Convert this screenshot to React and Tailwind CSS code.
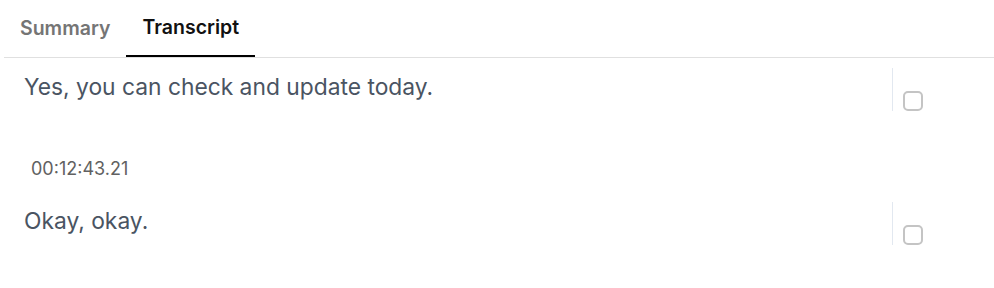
export default function App() {
  const font = { fontFamily: "Inter, 'Noto Sans', sans-serif" };
  return (
    <div className="w-[994px] h-[288px] bg-white" style={font}>
      <div className="ml-1 flex border-b border-[#e0e0e0] h-[58px]">
        <button className="px-4 h-full text-[19.5px] font-semibold text-[#757575]">Summary</button>
        <button className="px-4 h-full text-[19.5px] font-semibold text-[#111] border-b-2 border-black -mb-px">Transcript</button>
      </div>

      <div className="mt-[10px] flex">
        <div className="flex-1 pl-6 pt-[4px] text-[22.8px] leading-[30px] text-[#4a5462]">Yes, you can check and update today.</div>
        <div className="w-[102px] flex">
          <div className="w-px h-[43px] bg-[#e2e8f0]"></div>
          <div className="pl-[10px] pt-[23px]">
            <div className="w-[20px] h-[20px] rounded-[5px] border-2 border-[#c4c4c4]"></div>
          </div>
        </div>
      </div>

      <div className="mt-[47px] pl-[31px] text-[18px] leading-[22px] text-[#616161]">00:12:43.21</div>

      <div className="mt-[22px] flex">
        <div className="flex-1 pl-6 pt-[4px] text-[22.8px] leading-[30px] text-[#4a5462]">Okay, okay.</div>
        <div className="w-[102px] flex">
          <div className="w-px h-[43px] bg-[#e2e8f0]"></div>
          <div className="pl-[10px] pt-[23px]">
            <div className="w-[20px] h-[20px] rounded-[5px] border-2 border-[#c4c4c4]"></div>
          </div>
        </div>
      </div>
    </div>
  );
}
